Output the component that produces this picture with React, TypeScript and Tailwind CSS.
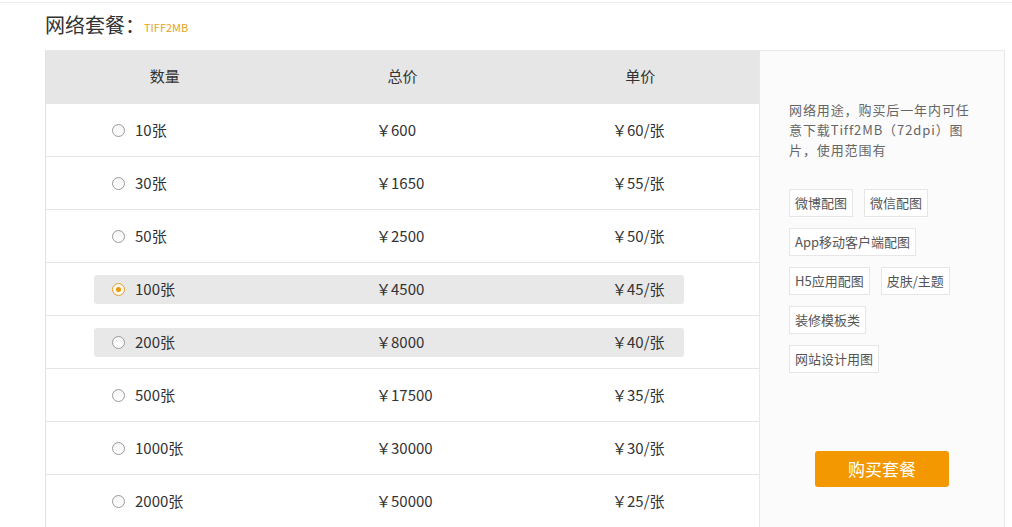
import React, { useState } from 'react'

const packages = [
  { count: '10张', total: '￥600', unit: '￥60/张' },
  { count: '30张', total: '￥1650', unit: '￥55/张' },
  { count: '50张', total: '￥2500', unit: '￥50/张' },
  { count: '100张', total: '￥4500', unit: '￥45/张' },
  { count: '200张', total: '￥8000', unit: '￥40/张' },
  { count: '500张', total: '￥17500', unit: '￥35/张' },
  { count: '1000张', total: '￥30000', unit: '￥30/张' },
  { count: '2000张', total: '￥50000', unit: '￥25/张' },
]

const tagRows = [
  ['微博配图', '微信配图'],
  ['App移动客户端配图'],
  ['H5应用配图', '皮肤/主题'],
  ['装修模板类'],
  ['网站设计用图'],
]

function Radio({ checked }: { checked: boolean }) {
  if (checked) {
    return (
      <span className="flex h-[13px] w-[13px] items-center justify-center rounded-full border border-[#e0a030] bg-[#fff8e8]">
        <span className="h-[5px] w-[5px] rounded-full bg-[#e8960c]" />
      </span>
    )
  }
  return <span className="h-[13px] w-[13px] rounded-full border border-[#9a9a9a] bg-gradient-to-b from-[#f4f4f4] to-white" />
}

export default function App() {
  const [selected, setSelected] = useState(3)

  return (
    <div className="h-[527px] w-[1012px] overflow-hidden bg-white text-[#333] font-['Noto_Sans_CJK_SC',sans-serif]">
      <div className="h-[3px] border-b border-[#ececec]" />
      <div className="flex h-[47px] items-center pl-[45px] pb-[3px]">
        <span className="text-[20px] leading-none text-[#333]">网络套餐：</span>
        <span className="ml-[-1px] mt-[5px] text-[11px] leading-none text-[#e8a317]">TIFF2MB</span>
      </div>

      <div className="ml-[45px] flex w-[960px]">
        <div className="w-[714px] border-l border-[#e2e2e2]">
          <div className="grid h-[53px] grid-cols-3 items-center bg-[#e6e6e6] text-[15px]">
            <div className="text-center">数量</div>
            <div className="text-center">总价</div>
            <div className="text-center">单价</div>
          </div>
          {packages.map((p, i) => {
            const active = i === 3 || i === 4
            return (
              <div key={p.count} className="flex h-[53px] items-center border-t border-[#e5e5e5] pl-[48px] pr-[75px] first:border-t-0 text-[15px]">
                <div
                  onClick={() => setSelected(i)}
                  className={`flex h-[29px] w-full cursor-pointer items-center rounded-[3px] pl-[18px] ${active ? 'bg-[#e8e8e8]' : ''}`}
                >
                  <div className="flex w-[264px] items-center gap-[10px]">
                    <Radio checked={selected === i} />
                    <span>{p.count}</span>
                  </div>
                  <div className="w-[236px]">{p.total}</div>
                  <div>{p.unit}</div>
                </div>
              </div>
            )
          })}
        </div>

        <div className="flex h-[477px] w-[246px] flex-col border border-b-0 border-[#e8e8e8] bg-[#fbfbfb] pl-[29px] pr-[30px]">
          <p className="mt-[49px] w-[186px] text-[13px] leading-[20px] tracking-[0.9px] text-[#666]">
            网络用途，购买后一年内可任意下载Tiff2MB（72dpi）图片，使用范围有
          </p>
          <div className="mt-[29px] flex flex-col gap-[11px]">
            {tagRows.map((row, ri) => (
              <div key={ri} className="flex gap-[11px]">
                {row.map(t => (
                  <span key={t} className="flex h-[28px] items-center border border-[#e6e6e6] bg-white px-[5px] text-[13px] text-[#555]">
                    {t}
                  </span>
                ))}
              </div>
            ))}
          </div>
          <button className="ml-[26px] mt-[78px] h-[36px] w-[134px] rounded-[3px] bg-[#f39800] text-[17px] text-white">
            购买套餐
          </button>
        </div>
      </div>
    </div>
  )
}
